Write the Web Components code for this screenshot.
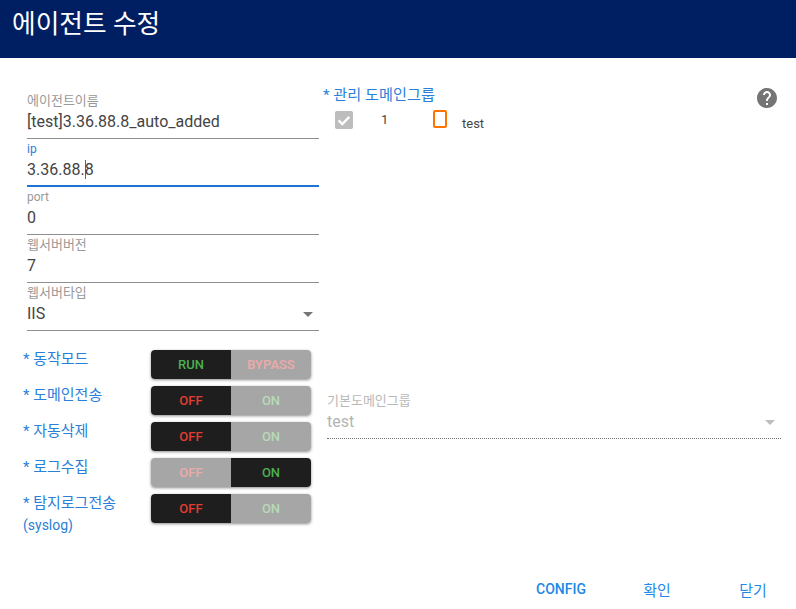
<!DOCTYPE html>
<html lang="ko">
<head>
<meta charset="utf-8">
<title>에이전트 수정</title>
<style>
    html, body {
        margin: 0;
        padding: 0;
        background: #fff;
        font-family: Roboto, "Noto Sans CJK KR", sans-serif;
    }
</style>
</head>
<body>
<agent-dialog>
    <dialog-title slot="title">에이전트 수정</dialog-title>

    <text-field slot="fields" label="에이전트이름" value="[test]3.36.88.8_auto_added"></text-field>
    <text-field slot="fields" label="ip" value="3.36.88." tail="8" focused></text-field>
    <text-field slot="fields" label="port" value="0"></text-field>
    <text-field slot="fields" label="웹서버버전" value="7"></text-field>
    <text-field slot="fields" label="웹서버타입" value="IIS" select></text-field>

    <toggle-row slot="toggles" left="RUN" right="BYPASS" active="left">* 동작모드</toggle-row>
    <toggle-row slot="toggles" left="OFF" right="ON" active="left">* 도메인전송</toggle-row>
    <toggle-row slot="toggles" left="OFF" right="ON" active="left">* 자동삭제</toggle-row>
    <toggle-row slot="toggles" left="OFF" right="ON" active="right">* 로그수집</toggle-row>
    <toggle-row slot="toggles" left="OFF" right="ON" active="left">* 탐지로그전송<span slot="sub">(syslog)</span></toggle-row>

    <domain-group slot="group" index="1" name="test">* 관리 도메인그룹</domain-group>
    <text-field slot="default" label="기본도메인그룹" value="test" select disabled></text-field>

    <text-button slot="actions" strong>CONFIG</text-button>
    <text-button slot="actions" ko>확인</text-button>
    <text-button slot="actions" ko>닫기</text-button>
</agent-dialog>

<template id="agent_dialog_tpl">
    <style>
        :host {
            display: flex;
            flex-direction: column;
            height: 609px;
            overflow: hidden;
        }
        .body {
            flex: 1;
            display: grid;
            grid-template-columns: 323px 1fr;
            grid-template-rows: auto 1fr;
            row-gap: 19px;
            padding-top: 33px;
        }
        .fields { padding-left: 27px; padding-right: 4px; display: block; }
        .toggles { padding-left: 23px; display: flex; flex-direction: column; }
        .group { margin-top: -7px; }
        .default { padding-left: 4px; padding-right: 15px; padding-top: 41px; }
        .actions {
            display: flex;
            justify-content: flex-end;
            gap: 8px;
            padding: 0 0 2px;
            margin-right: -1px;
        }
    </style>
    <slot name="title"></slot>
    <div class="body">
        <div class="fields"><slot name="fields"></slot></div>
        <div class="group"><slot name="group"></slot></div>
        <div class="toggles"><slot name="toggles"></slot></div>
        <div class="default"><slot name="default"></slot></div>
    </div>
    <div class="actions"><slot name="actions"></slot></div>
</template>

<template id="dialog_title_tpl">
    <style>
        :host {
            display: flex;
            align-items: center;
            height: 58px;
            padding: 0 12px 10px;
            box-sizing: border-box;
            background: #001e62;
            color: #fff;
            font-size: 25.7px;
            line-height: 32px;
        }
    </style>
    <slot></slot>
</template>

<template id="text_field_tpl">
    <style>
        :host {
            display: block;
            height: 48px;
            box-sizing: border-box;
            border-bottom: 1px solid #8f8f8f;
            position: relative;
            color: #444;
        }
        :host([focused]) { border-bottom: 2px solid #1976d2; height: 48px; }
        :host([disabled]) { border-bottom: 1px dotted #6f6f6f; color: #b4b4b4; }
        .label {
            display: block;
            height: 16px;
            padding-top: 3px;
            font-size: 12px;
            line-height: 14px;
            color: #999;
        }
        .label.ko { font-size: 13px; }
        :host([focused]) .label { color: #2a80d8; }
        :host([disabled]) .label { color: #b8b8b8; }
        .value {
            display: flex;
            align-items: center;
            justify-content: space-between;
            height: 24px;
            font-size: 16px;
            line-height: 24px;
        }
        .caret {
            display: inline-block;
            width: 0;
            height: 19px;
            border-left: 1px solid #1976d2;
            margin-right: -1px;
            vertical-align: -4px;
        }
        .arrow {
            width: 0;
            height: 0;
            margin-right: 6px;
            border-left: 5px solid transparent;
            border-right: 5px solid transparent;
            border-top: 5px solid #757575;
        }
        :host([disabled]) .arrow { border-top-color: #bdbdbd; }
    </style>
    <span class="label"></span>
    <div class="value"><span class="text"></span></div>
</template>

<template id="toggle_row_tpl">
    <style>
        :host {
            display: flex;
            height: 36px;
            color: #2a80d8;
        }
        .label {
            width: 128px;
            flex: none;
            box-sizing: border-box;
            margin-top: -2px;
            font-size: 15px;
            line-height: 22px;
        }
        .sub { display: block; font-size: 14px; }
        .switch {
            display: flex;
            width: 160px;
            height: 29px;
            border-radius: 4px;
            overflow: hidden;
            box-shadow: 0 1px 3px rgba(0, 0, 0, .45);
            font-size: 13px;
            font-weight: 500;
        }
        .part {
            flex: 1;
            display: flex;
            align-items: center;
            justify-content: center;
            background: #a6a6a6;
        }
        .part.on { background: #1e1e1e; }
        .left { color: #edaaaa; }
        .left.on { color: #e03c32; }
        .right { color: #b6dab6; }
        .right.on { color: #4caf50; }
        :host([left="RUN"]) .left { color: #4caf50; }
        :host([left="RUN"]) .right { color: #edaaaa; }
    </style>
    <div class="label"><slot></slot><span class="sub"><slot name="sub"></slot></span></div>
    <div class="switch">
        <span class="part left"></span>
        <span class="part right"></span>
    </div>
</template>

<template id="domain_group_tpl">
    <style>
        :host { display: block; }
        .head {
            display: flex;
            align-items: flex-start;
            justify-content: space-between;
            padding-right: 17px;
            height: 24px;
        }
        .title {
            font-size: 15.2px;
            line-height: 22px;
            color: #2a80d8;
        }
        .help { width: 24px; height: 24px; margin-top: 2px; display: block; fill: #757575; }
        .row {
            display: flex;
            align-items: flex-start;
            padding-left: 12px;
            font-size: 13px;
            color: #444;
        }
        .check { width: 18px; height: 18px; display: block; margin-top: 3px; }
        .index { width: 12px; margin-left: 28px; line-height: 16px; padding-top: 4px; }
        .tag {
            box-sizing: border-box;
            width: 14px;
            height: 18px;
            margin-left: 40px;
            margin-top: 2px;
            border: 2px solid #ff7400;
            border-radius: 2px;
        }
        .name { margin-left: 15px; line-height: 16px; margin-top: 8px; }
    </style>
    <div class="head">
        <div class="title"><slot></slot></div>
        <svg class="help" viewBox="0 0 24 24"><path d="M12 2C6.48 2 2 6.48 2 12s4.48 10 10 10 10-4.48 10-10S17.52 2 12 2zm1 17h-2v-2h2v2zm2.07-7.75l-.9.92C13.45 12.9 13 13.5 13 15h-2v-.5c0-1.1.45-2.1 1.17-2.83l1.24-1.26c.37-.36.59-.86.59-1.41 0-1.1-.9-2-2-2s-2 .9-2 2H8c0-2.21 1.79-4 4-4s4 1.79 4 4c0 .88-.36 1.68-.93 2.25z"/></svg>
    </div>
    <div class="row">
        <svg class="check" viewBox="0 0 18 18"><rect width="18" height="18" rx="2" fill="#bdbdbd"/><path d="M3.6 9.4l3.7 3.7 7-7.2" fill="none" stroke="#fff" stroke-width="2.4"/></svg>
        <span class="index"></span>
        <span class="tag"></span>
        <span class="name"></span>
    </div>
</template>

<template id="text_button_tpl">
    <style>
        :host {
            display: flex;
            align-items: center;
            justify-content: center;
            min-width: 88px;
            height: 36px;
            font-size: 14px;
            color: #2188e8;
        }
        :host([strong]) { font-weight: 500; }
        :host([ko]) { font-size: 15px; }
    </style>
    <slot></slot>
</template>

<script type="module">
    // small helper, all elements clone their template into an open root
    function attach(el, id) {
        el.attachShadow({mode: 'open'});
        el.shadowRoot.appendChild(document.getElementById(id).content.cloneNode(true));
    }

    class AgentDialog extends HTMLElement {
        constructor() {
            super();
            attach(this, 'agent_dialog_tpl');
        }
    }

    class DialogTitle extends HTMLElement {
        constructor() {
            super();
            attach(this, 'dialog_title_tpl');
        }
    }

    class TextField extends HTMLElement {
        constructor() {
            super();
            attach(this, 'text_field_tpl');
        }
        connectedCallback() {
            const root = this.shadowRoot;
            const label = root.querySelector('.label');
            label.textContent = this.getAttribute('label');
            // the hangul labels run a size up from the latin ones
            label.classList.toggle('ko', /[가-힣]/.test(label.textContent));
            const text = root.querySelector('.text');
            text.textContent = this.getAttribute('value');
            if (this.hasAttribute('tail')) {
                const caret = document.createElement('span');
                caret.className = 'caret';
                text.append(caret, this.getAttribute('tail'));
            }
            if (this.hasAttribute('select')) {
                const arrow = document.createElement('span');
                arrow.className = 'arrow';
                root.querySelector('.value').appendChild(arrow);
            }
        }
    }

    class ToggleRow extends HTMLElement {
        constructor() {
            super();
            attach(this, 'toggle_row_tpl');
        }
        connectedCallback() {
            const root = this.shadowRoot;
            const active = this.getAttribute('active');
            for (const side of ['left', 'right']) {
                const part = root.querySelector('.' + side);
                part.textContent = this.getAttribute(side);
                part.classList.toggle('on', side === active);
            }
        }
    }

    class DomainGroup extends HTMLElement {
        constructor() {
            super();
            attach(this, 'domain_group_tpl');
        }
        connectedCallback() {
            this.shadowRoot.querySelector('.index').textContent = this.getAttribute('index');
            this.shadowRoot.querySelector('.name').textContent = this.getAttribute('name');
        }
    }

    class TextButton extends HTMLElement {
        constructor() {
            super();
            attach(this, 'text_button_tpl');
        }
    }

    customElements.define('agent-dialog', AgentDialog);
    customElements.define('dialog-title', DialogTitle);
    customElements.define('text-field', TextField);
    customElements.define('toggle-row', ToggleRow);
    customElements.define('domain-group', DomainGroup);
    customElements.define('text-button', TextButton);
</script>
</body>
</html>
